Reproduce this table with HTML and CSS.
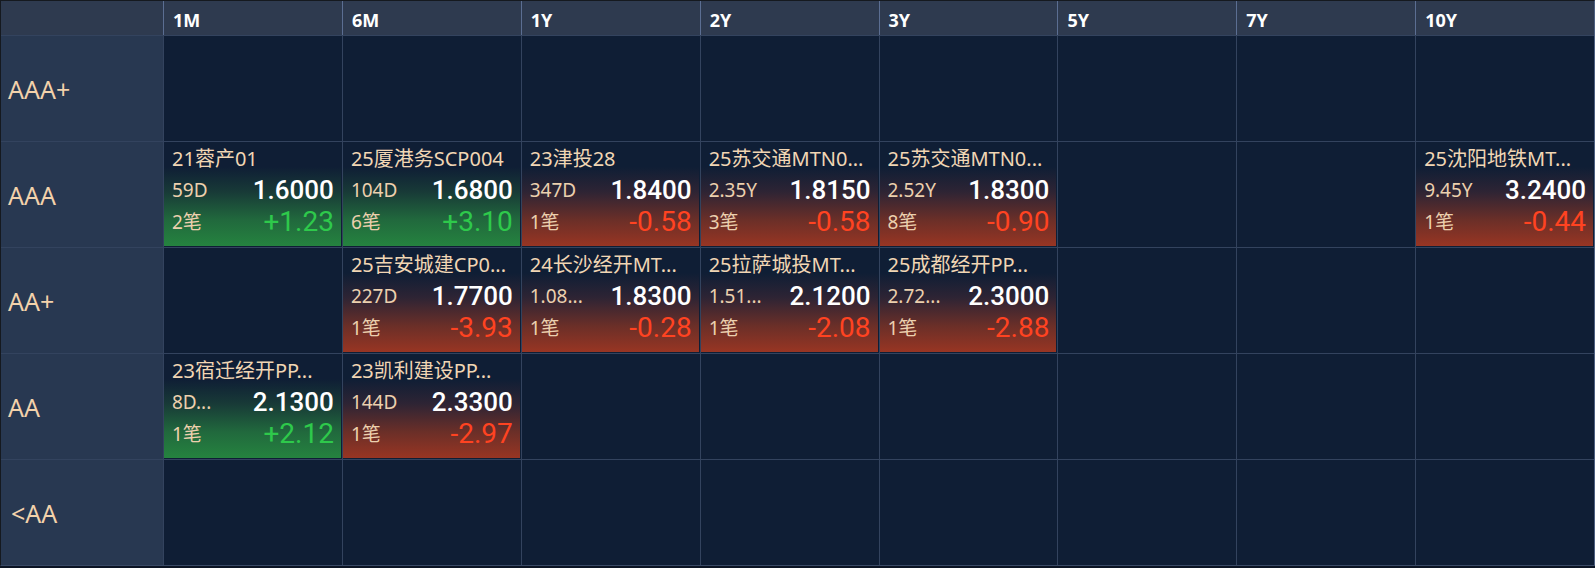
FILE: index.html
```html
<!DOCTYPE html>
<html lang="zh-CN">
<head>
<meta charset="utf-8">
<title>信用利差矩阵</title>
<link rel="stylesheet" href="styles.css">
</head>
<body>
<div class="matrix">
  <div class="hd corner"></div>
  <div class="hd">1M</div>
  <div class="hd">6M</div>
  <div class="hd">1Y</div>
  <div class="hd">2Y</div>
  <div class="hd">3Y</div>
  <div class="hd">5Y</div>
  <div class="hd">7Y</div>
  <div class="hd">10Y</div>

  <div class="rating">AAA+</div>
  <div class="cell"></div><div class="cell"></div><div class="cell"></div><div class="cell"></div>
  <div class="cell"></div><div class="cell"></div><div class="cell"></div><div class="cell"></div>

  <div class="rating">AAA</div>
  <div class="cell"><div class="card up">
    <div class="name">21蓉产01</div>
    <div class="line"><span class="sub">59D</span><span class="val">1.6000</span></div>
    <div class="line"><span class="sub">2笔</span><span class="chg">+1.23</span></div>
  </div></div>
  <div class="cell"><div class="card up">
    <div class="name">25厦港务SCP004</div>
    <div class="line"><span class="sub">104D</span><span class="val">1.6800</span></div>
    <div class="line"><span class="sub">6笔</span><span class="chg">+3.10</span></div>
  </div></div>
  <div class="cell"><div class="card down">
    <div class="name">23津投28</div>
    <div class="line"><span class="sub">347D</span><span class="val">1.8400</span></div>
    <div class="line"><span class="sub">1笔</span><span class="chg">-0.58</span></div>
  </div></div>
  <div class="cell"><div class="card down">
    <div class="name">25苏交通MTN0...</div>
    <div class="line"><span class="sub">2.35Y</span><span class="val">1.8150</span></div>
    <div class="line"><span class="sub">3笔</span><span class="chg">-0.58</span></div>
  </div></div>
  <div class="cell"><div class="card down">
    <div class="name">25苏交通MTN0...</div>
    <div class="line"><span class="sub">2.52Y</span><span class="val">1.8300</span></div>
    <div class="line"><span class="sub">8笔</span><span class="chg">-0.90</span></div>
  </div></div>
  <div class="cell"></div>
  <div class="cell"></div>
  <div class="cell"><div class="card down">
    <div class="name">25沈阳地铁MT...</div>
    <div class="line"><span class="sub">9.45Y</span><span class="val">3.2400</span></div>
    <div class="line"><span class="sub">1笔</span><span class="chg">-0.44</span></div>
  </div></div>

  <div class="rating">AA+</div>
  <div class="cell"></div>
  <div class="cell"><div class="card down">
    <div class="name">25吉安城建CP0...</div>
    <div class="line"><span class="sub">227D</span><span class="val">1.7700</span></div>
    <div class="line"><span class="sub">1笔</span><span class="chg">-3.93</span></div>
  </div></div>
  <div class="cell"><div class="card down">
    <div class="name">24长沙经开MT...</div>
    <div class="line"><span class="sub">1.08...</span><span class="val">1.8300</span></div>
    <div class="line"><span class="sub">1笔</span><span class="chg">-0.28</span></div>
  </div></div>
  <div class="cell"><div class="card down">
    <div class="name">25拉萨城投MT...</div>
    <div class="line"><span class="sub">1.51...</span><span class="val">2.1200</span></div>
    <div class="line"><span class="sub">1笔</span><span class="chg">-2.08</span></div>
  </div></div>
  <div class="cell"><div class="card down">
    <div class="name">25成都经开PP...</div>
    <div class="line"><span class="sub">2.72...</span><span class="val">2.3000</span></div>
    <div class="line"><span class="sub">1笔</span><span class="chg">-2.88</span></div>
  </div></div>
  <div class="cell"></div><div class="cell"></div><div class="cell"></div>

  <div class="rating">AA</div>
  <div class="cell"><div class="card up">
    <div class="name">23宿迁经开PP...</div>
    <div class="line"><span class="sub">8D...</span><span class="val">2.1300</span></div>
    <div class="line"><span class="sub">1笔</span><span class="chg">+2.12</span></div>
  </div></div>
  <div class="cell"><div class="card down">
    <div class="name">23凯利建设PP...</div>
    <div class="line"><span class="sub">144D</span><span class="val">2.3300</span></div>
    <div class="line"><span class="sub">1笔</span><span class="chg">-2.97</span></div>
  </div></div>
  <div class="cell"></div><div class="cell"></div><div class="cell"></div>
  <div class="cell"></div><div class="cell"></div><div class="cell"></div>

  <div class="rating lt">&lt;AA</div>
  <div class="cell"></div><div class="cell"></div><div class="cell"></div><div class="cell"></div>
  <div class="cell"></div><div class="cell"></div><div class="cell"></div><div class="cell"></div>
</div>
</body>
</html>
```

FILE: styles.css
```css
html, body {
  margin: 0;
  padding: 0;
  background: #0b1424;
}

body {
  font-family: "Noto Sans", "Noto Sans CJK SC", sans-serif;
  width: 1595px;
  height: 568px;
  overflow: hidden;
}

.matrix {
  display: grid;
  grid-template-columns: 162px repeat(8, 1fr);
  grid-template-rows: 34px repeat(5, 105px);
  gap: 1px;
  background: #33435e;
  border-top: 1px solid #15191f;
  border-left: 1px solid #15191f;
  border-right: 1px solid #4d5f80;
  border-bottom: 1px solid #3a4a66;
  box-sizing: border-box;
  width: 1595px;
}

.hd {
  background: #2e3a4f;
  color: #ffffff;
  font-weight: 700;
  font-size: 18px;
  padding: 6px 0 0 9px;
  line-height: 26px;
  box-shadow: -1px 0 0 #5b6e92;
}

.hd.corner {
  box-shadow: none;
}

.rating {
  background: #283851;
  color: #f3d2ab;
  font-size: 25px;
  display: flex;
  align-items: center;
  padding-left: 7px;
}

.rating.lt {
  padding-left: 10px;
}

.cell {
  background: #0f1e35;
  padding: 0 1px 1px 0;
  display: flex;
}

.card {
  flex: 1;
  min-width: 0;
  padding: 2px 7px 0 8px;
  box-sizing: border-box;
}

.card.up {
  background: linear-gradient(180deg, #0f1e35 0%, #0f1e35 24%, #183a37 48%, #21693d 75%, #25833f 100%);
}

.card.down {
  background: linear-gradient(180deg, #0f1e35 0%, #0f1e35 24%, #2e2434 48%, #6b2f28 75%, #983523 100%);
}

.name {
  color: #f1d6b4;
  font-size: 20px;
  line-height: 30px;
  height: 30px;
  white-space: nowrap;
  overflow: hidden;
  text-overflow: ellipsis;
}

.line {
  display: flex;
  justify-content: space-between;
  align-items: center;
  height: 32px;
  white-space: nowrap;
}

.sub {
  color: #ecd0ae;
  font-size: 19px;
  line-height: 32px;
}

.val {
  font-family: Roboto, "Noto Sans", sans-serif;
  color: #ffffff;
  font-size: 26px;
  font-weight: 500;
  line-height: 32px;
}

.chg {
  font-family: Roboto, "Noto Sans", sans-serif;
  font-size: 28px;
  line-height: 32px;
}

.up .chg {
  color: #2ec94b;
}

.down .chg {
  color: #ff4321;
}
```
